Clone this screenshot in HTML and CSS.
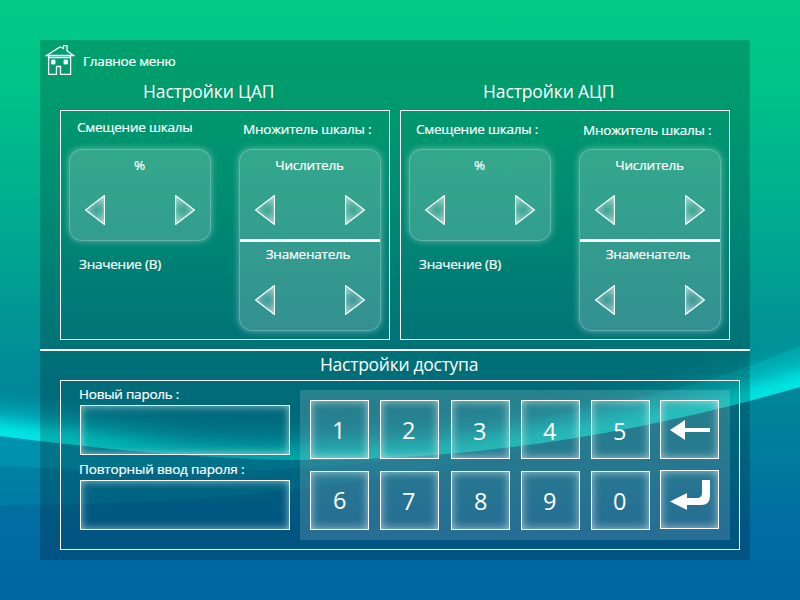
FILE: index.html
```html
<!DOCTYPE html>
<html lang="ru">
<head>
<meta charset="utf-8">
<title>Настройки</title>
<link rel="stylesheet" href="styles.css">
</head>
<body>
<svg class="backdrop" viewBox="0 0 800 600" aria-hidden="true">
  <defs>
    <linearGradient id="sky" x1="0" y1="0" x2="0" y2="1">
      <stop offset="0" stop-color="#00cb85"/>
      <stop offset=".13" stop-color="#00c488"/>
      <stop offset=".35" stop-color="#00ad90"/>
      <stop offset=".62" stop-color="#008a97"/>
      <stop offset=".76" stop-color="#007b9c"/>
      <stop offset=".88" stop-color="#006ca2"/>
      <stop offset="1" stop-color="#0066a4"/>
    </linearGradient>
    <linearGradient id="glowfade" gradientUnits="userSpaceOnUse" x1="0" y1="0" x2="800" y2="0">
      <stop offset="0" stop-color="#00f2ee"/>
      <stop offset=".12" stop-color="#00eeea"/>
      <stop offset=".24" stop-color="#00dcdc" stop-opacity=".85"/>
      <stop offset=".6" stop-color="#00e0dc" stop-opacity=".9"/>
      <stop offset="1" stop-color="#00f0ec"/>
    </linearGradient>
    <filter id="wide" filterUnits="userSpaceOnUse" x="-60" y="250" width="920" height="300"><feGaussianBlur stdDeviation="14"/></filter>
    <filter id="tight" filterUnits="userSpaceOnUse" x="-60" y="250" width="920" height="300"><feGaussianBlur stdDeviation="7"/></filter>
    <clipPath id="above"><path d="M0 0H800V387C640 433 480 460 300 460C200 459 100 449 0 436Z"/></clipPath>
    <linearGradient id="streak" gradientUnits="userSpaceOnUse" x1="730" y1="374" x2="746" y2="414">
      <stop offset="0" stop-color="#00e0e0" stop-opacity=".22"/>
      <stop offset="1" stop-color="#00e0e0" stop-opacity=".06"/>
    </linearGradient>
    <linearGradient id="streakmask" x1="0" y1="0" x2="1" y2="0">
      <stop offset="0" stop-color="#000"/>
      <stop offset=".6" stop-color="#fff"/>
    </linearGradient>
    <mask id="fadein" maskUnits="userSpaceOnUse" x="450" y="330" width="350" height="140">
      <rect x="450" y="330" width="350" height="140" fill="url(#streakmask)"/>
    </mask>
    <linearGradient id="band" x1="0" y1="0" x2="1" y2="0">
      <stop offset="0" stop-color="#00b4c4" stop-opacity=".3"/>
      <stop offset="1" stop-color="#00b4c4" stop-opacity=".2"/>
    </linearGradient>
  </defs>
  <rect width="800" height="600" fill="url(#sky)"/>
  <path d="M0 436C100 449 200 459 300 460C400 460 500 451 560 441C470 460 380 480 300 489C200 501 100 505 0 505Z" fill="#0094b4" opacity=".3"/>
  <path d="M0 436C100 449 200 459 300 460C370 460 440 456 510 449C430 456 370 463 300 468C200 474 100 472 0 466Z" fill="url(#band)"/>
  <g clip-path="url(#above)" fill="none">
    <path d="M-40 431C100 449 200 459 300 460C480 460 640 433 840 375" stroke="url(#glowfade)" stroke-width="46" opacity=".66" filter="url(#wide)"/>
    <path d="M-40 431C100 449 200 459 300 460C480 460 640 433 840 375" stroke="url(#glowfade)" stroke-width="24" opacity=".8" filter="url(#tight)"/>
    <path d="M800 346C735 374 650 400 530 420L450 440L450 470L800 430Z" fill="url(#streak)" mask="url(#fadein)"/>
  </g>
</svg>

<main class="panel">
  <header class="menu">
    <svg class="house" viewBox="0 0 30 32" fill="none" stroke="#fff" stroke-width="1.3">
      <path d="M1.500 11.500H28.500L22 6.800V1.700H18.500V4.500L15 3Z"/>
      <path d="M3.600 11.700V30.300H11.500V22.500H15.500V30.300H25.600V11.700M3.600 13.500H25.600"/>
      <path d="M6.500 16H10V20H6.500ZM19 16H22.500V20H19Z" fill="#fff" stroke-width=".8"/>
    </svg>
    <span class="menu-text">Главное меню</span>
  </header>

  <div class="converters">
    <section class="converter">
      <h2 class="title">Настройки ЦАП</h2>
      <div class="frame">
        <div class="column">
          <p class="label label-high">Смещение шкалы</p>
          <div class="card">
            <div class="half"><p class="unit">%</p>
              <div class="arrows"><svg class="tri" viewBox="0 0 20 30"><use href="#tri"/></svg><svg class="tri flip" viewBox="0 0 20 30"><use href="#tri"/></svg></div></div>
          </div>
          <p class="label value">Значение (В)</p>
        </div>
        <div class="column">
          <p class="label factor">Множитель шкалы :</p>
          <div class="card">
            <div class="half"><p class="unit">Числитель</p>
              <div class="arrows"><svg class="tri" viewBox="0 0 20 30"><use href="#tri"/></svg><svg class="tri flip" viewBox="0 0 20 30"><use href="#tri"/></svg></div></div>
            <div class="half lower"><p class="unit denominator">Знаменатель</p>
              <div class="arrows"><svg class="tri" viewBox="0 0 20 30"><use href="#tri"/></svg><svg class="tri flip" viewBox="0 0 20 30"><use href="#tri"/></svg></div></div>
          </div>
        </div>
      </div>
    </section>
    <section class="converter">
      <h2 class="title">Настройки АЦП</h2>
      <div class="frame">
        <div class="column">
          <p class="label">Смещение шкалы :</p>
          <div class="card">
            <div class="half"><p class="unit">%</p>
              <div class="arrows"><svg class="tri" viewBox="0 0 20 30"><use href="#tri"/></svg><svg class="tri flip" viewBox="0 0 20 30"><use href="#tri"/></svg></div></div>
          </div>
          <p class="label value">Значение (В)</p>
        </div>
        <div class="column">
          <p class="label factor label-low">Множитель шкалы :</p>
          <div class="card">
            <div class="half"><p class="unit">Числитель</p>
              <div class="arrows"><svg class="tri" viewBox="0 0 20 30"><use href="#tri"/></svg><svg class="tri flip" viewBox="0 0 20 30"><use href="#tri"/></svg></div></div>
            <div class="half lower"><p class="unit denominator">Знаменатель</p>
              <div class="arrows"><svg class="tri" viewBox="0 0 20 30"><use href="#tri"/></svg><svg class="tri flip" viewBox="0 0 20 30"><use href="#tri"/></svg></div></div>
          </div>
        </div>
      </div>
    </section>
  </div>

  <section class="access">
    <h2 class="access-title">Настройки доступа</h2>
    <div class="access-frame">
      <div class="passwords">
        <p class="field-label first">Новый пароль :</p>
        <div class="field"></div>
        <p class="field-label second">Повторный ввод пароля :</p>
        <div class="field"></div>
      </div>
      <div class="keypad">
        <div class="key">1</div><div class="key">2</div><div class="key low">3</div><div class="key low">4</div><div class="key low">5</div>
        <div class="key"><svg class="key-icon" viewBox="0 0 57 57" fill="#fff"><path d="M9 29L24 19V27H49V31H24V39Z"/></svg></div>
        <div class="key six">6</div><div class="key">7</div><div class="key eight">8</div><div class="key">9</div><div class="key">0</div>
        <div class="key enter"><svg class="key-icon" viewBox="0 0 57 57" fill="#fff"><path d="M9 30.500L26 22V27H36Q41 27 41 22V9H49V25Q49 34 40 34H26V39Z"/></svg></div>
      </div>
    </div>
  </section>
</main>

<svg class="symbols" aria-hidden="true">
  <defs>
    <radialGradient id="trifill" gradientUnits="userSpaceOnUse" cx="12" cy="15" r="14">
      <stop offset="0" stop-color="#fff" stop-opacity=".04"/>
      <stop offset=".35" stop-color="#fff" stop-opacity=".18"/>
      <stop offset="1" stop-color="#fff" stop-opacity=".55"/>
    </radialGradient>
  </defs>
  <symbol id="tri" viewBox="0 0 20 30"><path d="M.6 15L19.500.6V29.400Z" fill="url(#trifill)" stroke="#fff" stroke-width="1.200" stroke-linejoin="round"/></symbol>
</svg>
</body>
</html>
```
FILE: styles.css
```css
* { box-sizing: border-box; }

body {
  margin: 0;
  width: 800px;
  height: 600px;
  overflow: hidden;
  padding: 40px;
  font-family: "Open Sans", "Noto Sans", sans-serif;
  font-size: 13.5px;
  letter-spacing: -.22px;
  color: #fff;
  background: #008a97;
}

p, h2 { margin: 0; font-weight: 400; white-space: nowrap; }
p, .menu-text { -webkit-text-stroke: .2px #fff; }
svg { display: block; }

.backdrop { position: absolute; inset: 0; width: 800px; height: 600px; }
.symbols { position: absolute; width: 0; height: 0; }

.panel {
  position: relative;
  width: 710px;
  height: 520px;
  background: rgba(0, 0, 0, .2);
}

.menu { display: flex; height: 40px; padding: 4px 0 0 5px; }
.house { width: 30px; height: 32px; }
.menu-text { margin-left: 8px; line-height: 34px; letter-spacing: -.2px; }

.converters { display: flex; gap: 10px; padding-left: 20px; height: 269px; }
.converter { width: 330px; }
.title { height: 30px; padding-left: 83px; line-height: 23px; font-size: 17.500px; letter-spacing: -.12px; }

.frame { display: flex; gap: 30px; height: 230px; border: 1px solid #fff; padding-left: 9px; }
.column { width: 140px; }
.label { height: 39px; padding-left: 6px; line-height: 37px; }
.factor { padding-left: 3px; }
.label-high { padding-left: 7px; line-height: 33px; }
.label-low { line-height: 39px; }
.value { padding-left: 9px; line-height: 48px; }

.card {
  border-radius: 12px;
  background: rgba(255, 255, 255, .2);
  box-shadow: 0 0 0 1px rgba(255, 255, 255, .22), 0 0 6px 2px rgba(255, 255, 255, .32);
}
.half { height: 90px; }
.unit { height: 45px; line-height: 31px; text-align: center; padding-right: 1px; }
.lower { position: relative; }
.lower::before { content: ""; position: absolute; left: 0; right: 0; top: -1px; height: 3px; background: #fff; }
.denominator { line-height: 29px; padding-right: 4px; }
.arrows { display: flex; justify-content: space-between; padding: 0 15px; }
.tri { width: 20px; height: 30px; }
.flip { transform: scaleX(-1); }

.access { height: 211px; border-top: 2px solid #fff; }
.access-title { height: 29px; padding-left: 280px; line-height: 26px; font-size: 17.500px; letter-spacing: -.28px; }
.access-frame { display: flex; gap: 10px; width: 680px; height: 170px; margin-left: 20px; border: 1px solid #fff; padding: 0 0 0 19px; }
.passwords { width: 210px; }
.field-label { height: 25px; margin-left: -1px; }
.first { height: 24px; line-height: 26px; }
.second { line-height: 29px; letter-spacing: -.15px; }
.field { height: 50px; border: 1px solid #fff; box-shadow: inset 0 0 9px rgba(255, 255, 255, .6); }

.keypad {
  display: grid;
  grid-template-columns: 70px 71px 70px 70px 69px 59px;
  grid-template-rows: 71px 59px;
  width: 430px;
  height: 150px;
  margin-top: 9px;
  padding: 10px;
  background: rgba(255, 255, 255, .15);
}
.key {
  width: 59px;
  height: 59px;
  border: 1px solid #fff;
  box-shadow: inset 0 0 10px rgba(255, 255, 255, .6);
  text-align: center;
  font-size: 23.500px;
  line-height: 59px;
  padding-right: 2px;
}
.low { line-height: 61px; }
.six { padding: 0; line-height: 57px; }
.eight { padding: 0; }
.enter { margin-top: -1px; }
.key-icon { width: 57px; height: 57px; }
```
